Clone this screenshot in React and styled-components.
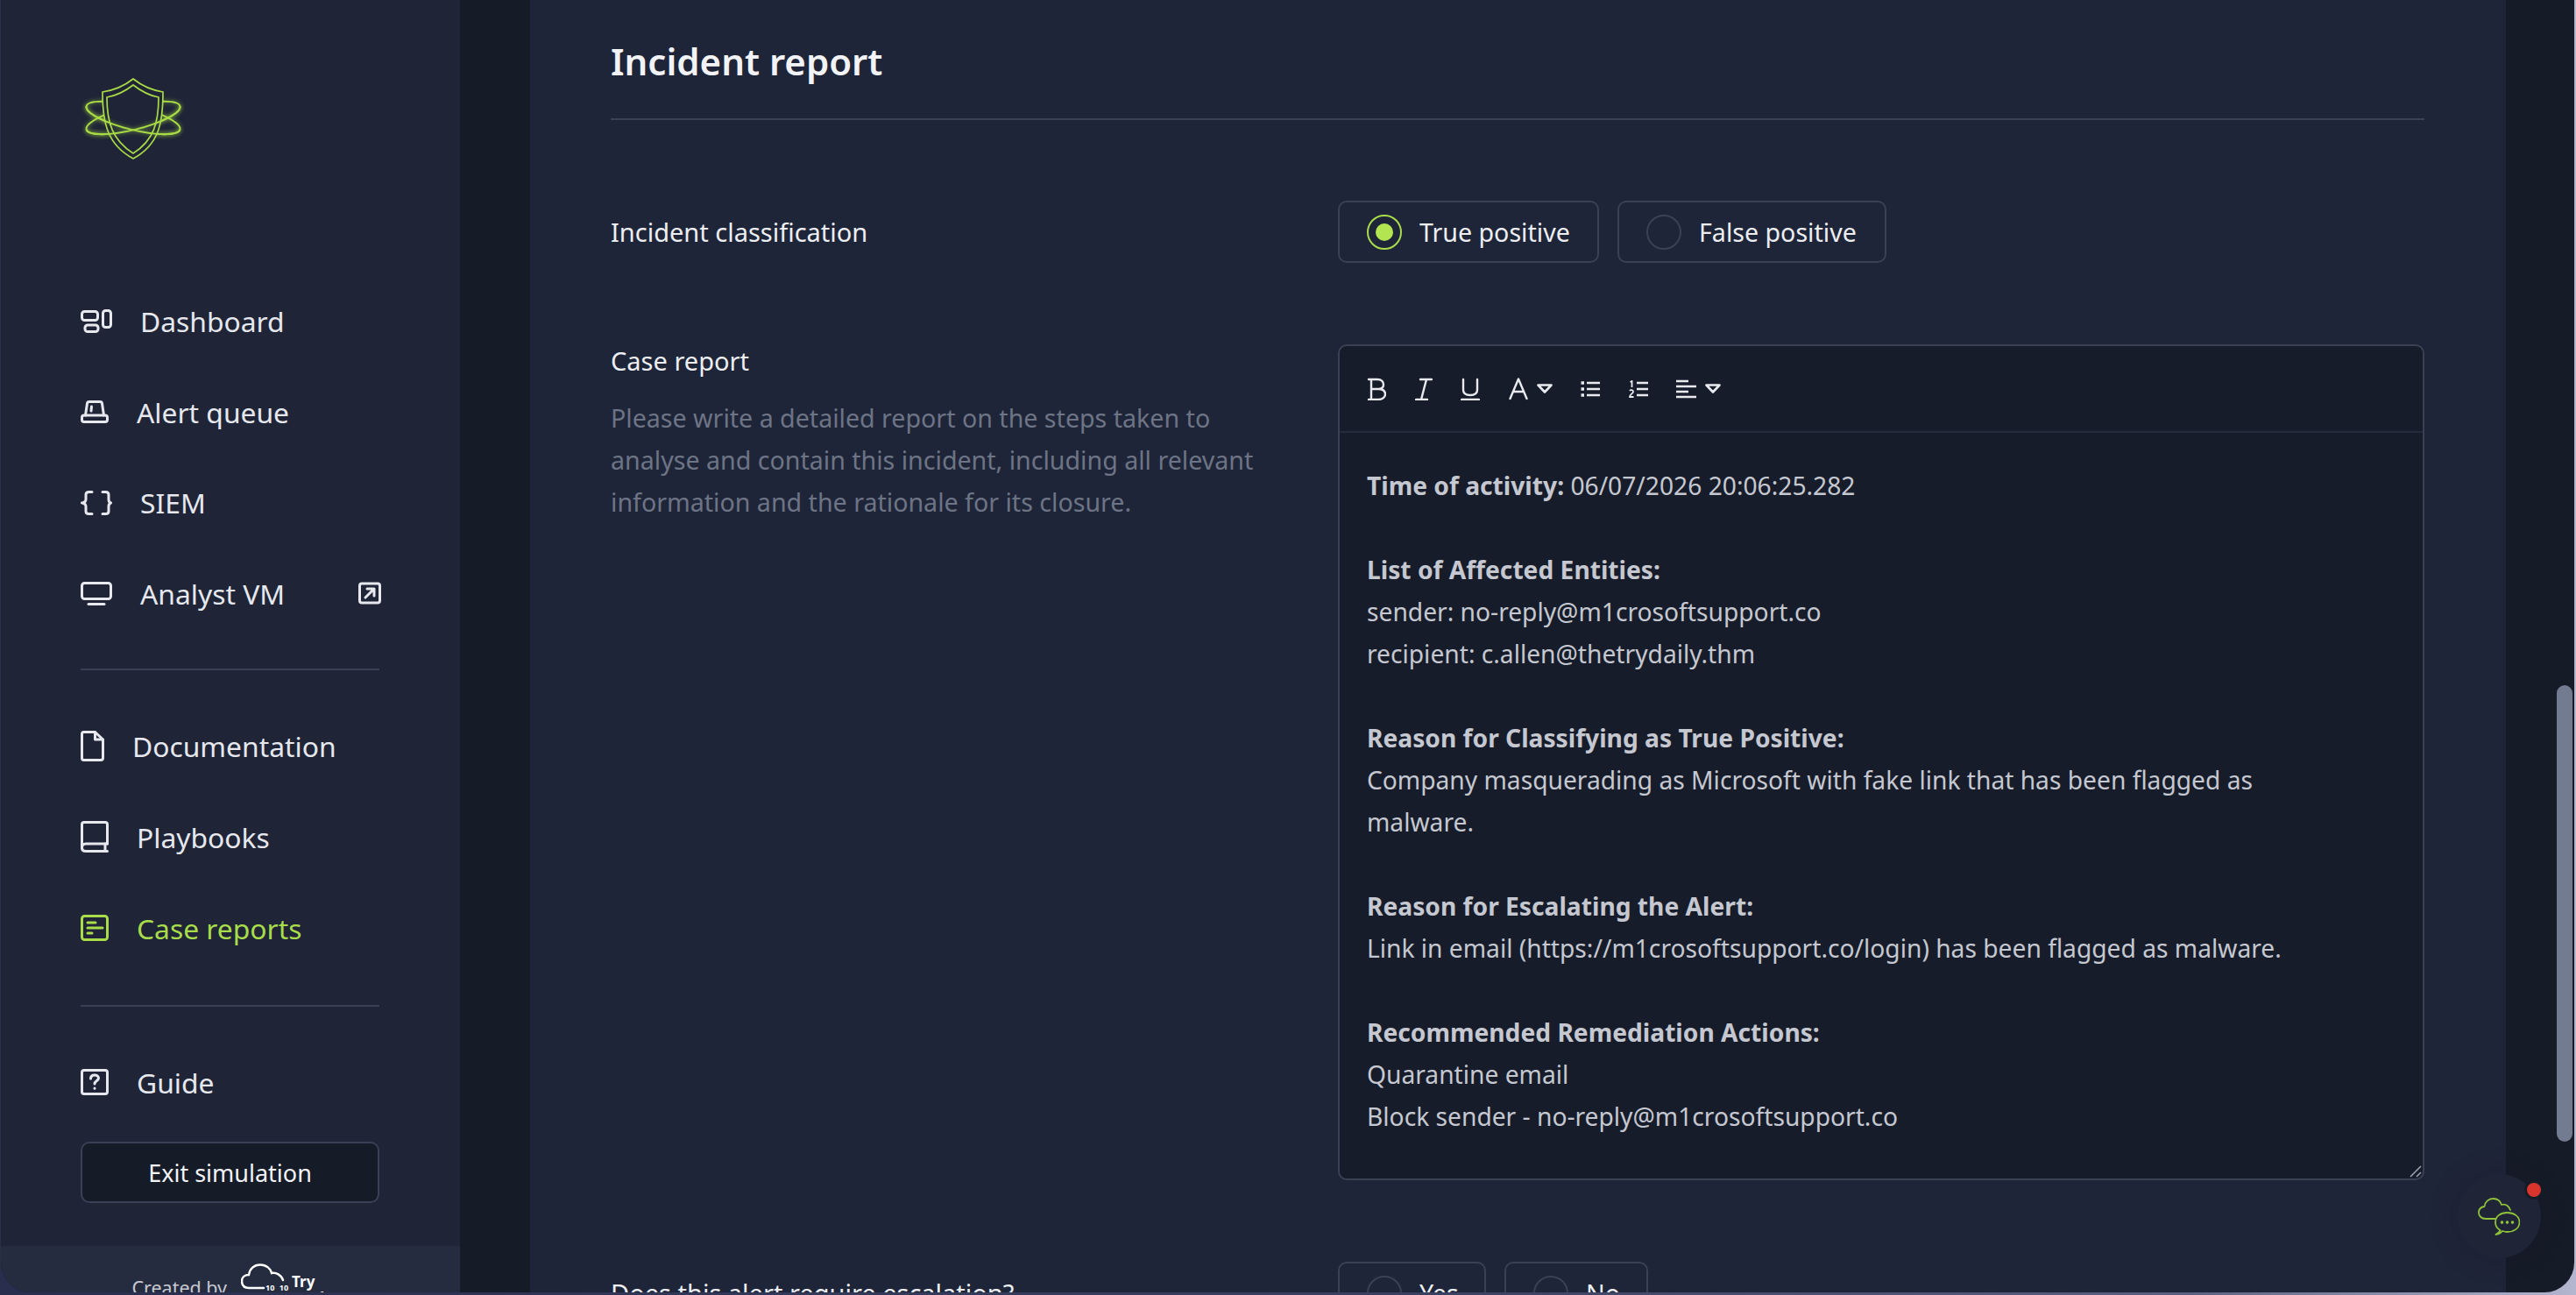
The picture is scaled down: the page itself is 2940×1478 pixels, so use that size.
import styled, { createGlobalStyle } from "styled-components"

const GlobalStyle = createGlobalStyle`
    html, body {
        margin: 0;
        padding: 0;
        background: #2b3050;
        overflow: hidden;
    }
    * {
        box-sizing: border-box;
    }
`

const FONT = `"Noto Sans", "Open Sans", sans-serif`

const Icon = ({ w, h, vb, color = "currentColor", sw = 3, children }) => (
    <svg width={w} height={h} viewBox={vb} fill="none" stroke={color} strokeWidth={sw} strokeLinecap="round" strokeLinejoin="round">
        {children}
    </svg>
)

const SHIELD_OUTER = "M54 1 C44 9 32 14 19 16 C19 50 24 76 54 92 C84 76 88 50 88 16 C76 14 64 9 54 1Z"
const SHIELD_INNER = "M54 8 C45 15 36 20 24 22 C24 50 30 71 54 86 C78 71 83 50 83 22 C71 20 63 15 54 8Z"

const Logo = () => (
    <svg width="108" height="93" viewBox="0 0 108 93" fill="none" stroke="#a9db45" strokeWidth="1.7" style={{ overflow: "visible" }}>
        <Orbits strokeWidth="2">
            <ellipse cx="54" cy="45.5" rx="55" ry="13.5" transform="rotate(14 54 45.5)" />
            <ellipse cx="54" cy="45.5" rx="55" ry="13.5" transform="rotate(-14 54 45.5)" />
        </Orbits>
        <path d={SHIELD_OUTER} fill="#1f2537" />
        <path d={SHIELD_INNER} />
        <Orbits strokeWidth="2">
            <path d="M0.6 32.2 A55 13.5 14 0 0 107.4 58.8" />
            <path d="M0.6 58.8 A55 13.5 -14 0 0 107.4 32.2" />
        </Orbits>
    </svg>
)

const navTop = [
    {
        label: "Dashboard",
        icon: (
            <Icon w={36} h={27} vb="0 0 36 27">
                <rect x="1.5" y="2.5" width="18" height="10" rx="3" />
                <rect x="5" y="18" width="15" height="7.5" rx="3" />
                <rect x="25.5" y="1.5" width="9" height="19" rx="3" />
            </Icon>
        ),
    },
    {
        label: "Alert queue",
        icon: (
            <Icon w={32} h={26} vb="0 0 32 26">
                <rect x="1.5" y="17" width="29" height="7.5" rx="2.5" />
                <path d="M5.5 17 L7.5 3.5 C7.6 2.2 8.5 1.5 10 1.5 H22 C23.5 1.5 24.4 2.2 24.5 3.5 L26.5 17" />
                <path d="M12.5 7 L12 12" />
            </Icon>
        ),
    },
    {
        label: "SIEM",
        icon: (
            <Icon w={36} h={28} vb="0 0 36 28">
                <path d="M13 1.5 H9.5 C7 1.5 6 3 6 4.5 V10 C6 12 4.5 13.5 1.5 14 C4.5 14.5 6 16 6 18 V23.5 C6 25 7 26.5 9.5 26.5 H13" />
                <path d="M25 1.5 H28.5 C31 1.5 32 3 32 4.5 V10 C32 12 33 13.5 34.5 14 C33 14.5 32 16 32 18 V23.5 C32 25 31 26.5 28.5 26.5 H25" />
            </Icon>
        ),
    },
    {
        label: "Analyst VM",
        external: true,
        icon: (
            <Icon w={36} h={27} vb="0 0 36 27">
                <rect x="1.5" y="1.5" width="33" height="18" rx="3" />
                <path d="M9 25.5 H27" />
            </Icon>
        ),
    },
]

const navDocs = [
    {
        label: "Documentation",
        icon: (
            <Icon w={27} h={35} vb="0 0 27 35">
                <path d="M3.5 1.5 H16.5 L25.5 10 V31 C25.5 32.5 24.5 33.5 23 33.5 H3.5 C2.2 33.5 1.5 32.5 1.5 31 V4 C1.5 2.5 2.2 1.5 3.5 1.5Z" />
                <path d="M16.5 1.5 V10 H25.5" />
            </Icon>
        ),
    },
    {
        label: "Playbooks",
        icon: (
            <Icon w={32} h={36} vb="0 0 32 36">
                <path d="M30.5 26 V4 C30.5 2.5 29.5 1.5 28 1.5 H4 C2.5 1.5 1.5 2.5 1.5 4 V31" />
                <path d="M30.5 26 H6 C3 26 1.5 28 1.5 30.5 C1.5 33 3 34.5 6 34.5 H30.5" />
                <path d="M28 26 V34.5" />
            </Icon>
        ),
    },
    {
        label: "Case reports",
        active: true,
        icon: (
            <Icon w={32} h={30} vb="0 0 32 30">
                <rect x="1.5" y="1.5" width="29" height="27" rx="3" />
                <path d="M8 9 H17 M8 15 H25 M8 21 H13" />
            </Icon>
        ),
    },
]

const toolbar = [
    {
        w: 22, h: 26,
        d: "M2 2 H12 C17 2 19 5 19 8 C19 11 17 13 13 13 C18 13 21 15 21 19 C21 22 18 25 13 25 H2 M5 2 V25 M5 13 H13",
    },
    { w: 20, h: 26, d: "M6 2 H19 M1 25 H14 M13 2 L7 25" },
    { w: 22, h: 26, d: "M3 2 V14 C3 18 6 20 11 20 C16 20 19 18 19 14 V2 M1 25 H21" },
]

const Caret = () => (
    <svg width="18" height="11" viewBox="0 0 18 11" fill="none" stroke="#e8eaef" strokeWidth="2.6" strokeLinejoin="round">
        <path d="M1.5 1.5 H16.5 L9 9.5Z" />
    </svg>
)

export default function App() {
    return (
        <>
            <GlobalStyle />
            <Screen>
                <Window>
                    <Sidebar>
                        <LogoBox>
                            <Logo />
                        </LogoBox>
                        <NavGroup $row={103.5}>
                            {navTop.map(item => (
                                <NavItem key={item.label} $active={item.active}>
                                    {item.icon}
                                    <span>{item.label}</span>
                                    {item.external && (
                                        <External>
                                            <Icon w={26} h={26} vb="0 0 26 26">
                                                <rect x="1.5" y="2" width="23" height="22" rx="2.5" />
                                                <path d="M8 18 L18 8 M10 8 H18 V16" />
                                            </Icon>
                                        </External>
                                    )}
                                </NavItem>
                            ))}
                        </NavGroup>
                        <Divider $before={34} $after={34} />
                        <NavGroup $row={104}>
                            {navDocs.map(item => (
                                <NavItem key={item.label} $active={item.active}>
                                    {item.icon}
                                    <span>{item.label}</span>
                                </NavItem>
                            ))}
                        </NavGroup>
                        <Divider $before={36} $after={34} />
                        <NavGroup $row={104}>
                            <NavItem>
                                <Icon w={32} h={30} vb="0 0 32 30">
                                    <rect x="1.5" y="1.5" width="29" height="27" rx="2.5" />
                                    <path d="M11.5 11 C11.5 8 13.5 7 16 7 C18.5 7 20.5 8.5 20.5 10.5 C20.5 13.5 16 13.5 16 17" />
                                    <path d="M16 22 V22.2" />
                                </Icon>
                                <span>Guide</span>
                            </NavItem>
                        </NavGroup>
                        <ExitButton>Exit simulation</ExitButton>
                        <Footer>
                            <CreatedBy>Created by</CreatedBy>
                            <BrandMark>
                                <svg width="50" height="34" viewBox="0 0 50 34" fill="none" stroke="#fff" strokeWidth="2.4" strokeLinecap="round">
                                    <path d="M26 28 H9 C4 28 1 25 1 20 C1 15 5 13 9 13 C10 6 15 1.5 22 1.5 C29 1.5 34 6 35 11 C40 10 46 13 48 19" />
                                </svg>
                                <BrandBits>10 10</BrandBits>
                                <BrandName>Try<br />Hack</BrandName>
                            </BrandMark>
                        </Footer>
                    </Sidebar>
                    <Main>
                        <Heading>Incident report</Heading>
                        <FormRow>
                            <Label>Incident classification</Label>
                            <RadioGroup>
                                <RadioOption $w={298}>
                                    <RadioCircle $checked />
                                    True positive
                                </RadioOption>
                                <RadioOption $w={307}>
                                    <RadioCircle />
                                    False positive
                                </RadioOption>
                            </RadioGroup>
                        </FormRow>
                        <FormRow $top>
                            <div>
                                <ReportLabel>Case report</ReportLabel>
                                <Help>
                                    Please write a detailed report on the steps taken to analyse and contain this incident, including all relevant information and the rationale for its closure.
                                </Help>
                            </div>
                            <Editor>
                                <Toolbar>
                                    {toolbar.map(t => (
                                        <ToolIcon key={t.d} $w={t.w}>
                                            <svg width={t.w} height={t.h} viewBox={`0 0 ${t.w} ${t.h}`} fill="none" stroke="#e8eaef" strokeWidth="2.4" strokeLinecap="round" strokeLinejoin="round">
                                                <path d={t.d} />
                                            </svg>
                                        </ToolIcon>
                                    ))}
                                    <ToolCombo>
                                        <svg width="22" height="26" viewBox="0 0 22 26" fill="none" stroke="#e8eaef" strokeWidth="2.4" strokeLinecap="round" strokeLinejoin="round">
                                            <path d="M1.5 24 L11 1.5 L20.5 24 M5.5 16 H16.5" />
                                        </svg>
                                        <Caret />
                                    </ToolCombo>
                                    <ToolIcon $w={22}>
                                        <svg width="22" height="18" viewBox="0 0 22 18" fill="none" stroke="#e8eaef" strokeWidth="2.4">
                                            <path d="M7 2 H22 M7 9 H22 M7 16 H22" />
                                            <path d="M0.5 2 H4 M0.5 9 H4 M0.5 16 H4" strokeWidth="3.6" />
                                        </svg>
                                    </ToolIcon>
                                    <ToolIcon $w={22}>
                                        <svg width="22" height="20" viewBox="0 0 22 20" fill="none" stroke="#e8eaef" strokeWidth="2.4">
                                            <path d="M9 3 H22 M9 10 H22 M9 17 H22" />
                                            <path d="M1.5 2 L3.5 1 V8 M1 12 C2 10.5 5 11 5 13 C5 15 1 16 1 19 H5.5" strokeWidth="1.8" />
                                        </svg>
                                    </ToolIcon>
                                    <ToolCombo>
                                        <svg width="23" height="22" viewBox="0 0 23 22" fill="none" stroke="#e8eaef" strokeWidth="2.4">
                                            <path d="M0 2 H14 M0 8 H23 M0 14 H14 M0 20 H23" />
                                        </svg>
                                        <Caret />
                                    </ToolCombo>
                                </Toolbar>
                                <EditorBody>
                                    <p><b>Time of activity:</b> 06/07/2026 20:06:25.282</p>
                                    <p><b>List of Affected Entities:</b><br />sender: no-reply@m1crosoftsupport.co<br />recipient: c.allen@thetrydaily.thm</p>
                                    <p><b>Reason for Classifying as True Positive:</b><br />Company masquerading as Microsoft with fake link that has been flagged as malware.</p>
                                    <p><b>Reason for Escalating the Alert:</b><br />Link in email (https://m1crosoftsupport.co/login) has been flagged as malware.</p>
                                    <p><b>Recommended Remediation Actions:</b><br />Quarantine email<br />Block sender - no-reply@m1crosoftsupport.co</p>
                                </EditorBody>
                                <Grip width="14" height="14" viewBox="0 0 14 14" stroke="#9aa0ad" strokeWidth="1.6">
                                    <path d="M1 13 L13 1 M8 13 L13 8" />
                                </Grip>
                            </Editor>
                        </FormRow>
                        <FormRow>
                            <Label>Does this alert require escalation?</Label>
                            <RadioGroup>
                                <RadioOption $w={169}>
                                    <RadioCircle />
                                    Yes
                                </RadioOption>
                                <RadioOption $w={164}>
                                    <RadioCircle />
                                    No
                                </RadioOption>
                            </RadioGroup>
                        </FormRow>
                    </Main>
                    <ScrollThumb />
                    <ChatButton>
                        <svg width="48" height="43" viewBox="0 0 48 43" fill="none" stroke="#8fc23a" strokeWidth="1.8" strokeLinecap="round" strokeLinejoin="round">
                            <path d="M20 24 H9 C4 24 1 21 1 17 C1 13 3.5 10.5 7.5 10 C8 5 12 1 17.5 1 C22 1 25.5 3.5 27 8 C31 7 35 9 37 14" />
                            <path d="M25.5 37 C21 34.5 20 31 20 28 C20 21 26 17 33.5 17 C41 17 47.5 21 47.5 28 C47.5 35 41 39 33.5 39 C31.5 39 29.5 38.5 28 38 C26.5 40 24 41.5 20.5 42 C22.5 40.5 25 39 25.5 37Z" />
                            <path d="M27.5 28 V28.1 M33.5 28 V28.1 M39.5 28 V28.1" strokeWidth="3.6" />
                        </svg>
                        <Badge />
                    </ChatButton>
                </Window>
            </Screen>
        </>
    )
}

const Screen = styled.div`
    width: 2940px;
    height: 1478px;
    padding: 0 2px 3px 1px;
    overflow: hidden;
    font-family: ${FONT};
    background: linear-gradient(90deg, #2a2e4e 0%, #3a4160 55%, #5a6180 85%, #b4b6cf 100%);
`

const Window = styled.div`
    position: relative;
    display: flex;
    height: 1475px;
    background: #161b28;
    border-radius: 0 0 34px 34px;
    overflow: hidden;
`

const Sidebar = styled.aside`
    display: flex;
    flex-direction: column;
    flex: 0 0 524px;
    margin-right: 80px;
    padding: 89px 91px 0;
    background: #1f2537;
`

const LogoBox = styled.div`
    height: 93px;
    margin: 0 0 133px 6px;
`

const Orbits = styled.g`
    filter: drop-shadow(0 0 2.5px rgba(169, 219, 69, 0.7));
`

const NavGroup = styled.nav`
    display: flex;
    flex-direction: column;
    a {
        height: ${props => props.$row}px;
    }
`

const NavItem = styled.a`
    display: flex;
    align-items: center;
    gap: 32px;
    font-size: 31.8px;
    color: ${props => props.$active ? "#a9dc4a" : "#e6e8ee"};
`

const External = styled.span`
    display: flex;
    margin-left: auto;
    margin-right: -1px;
`

const Divider = styled.hr`
    width: 341px;
    height: 2px;
    margin: ${props => props.$before}px 0 ${props => props.$after}px;
    border: 0;
    background: #394053;
`

const ExitButton = styled.button`
    width: 341px;
    height: 70px;
    flex: none;
    margin-top: 16px;
    border: 2px solid #3a4154;
    border-radius: 10px;
    background: #161b28;
    color: #f2f3f6;
    font-family: ${FONT};
    font-size: 27px;
`

const Footer = styled.div`
    display: flex;
    align-items: flex-start;
    justify-content: center;
    gap: 16px;
    height: 53px;
    margin: 49px -91px 0;
    padding: 20px 0 0;
    background: #252c40;
    overflow: hidden;
`

const CreatedBy = styled.span`
    margin-top: 12px;
    color: #c5c8d1;
    font-size: 21.5px;
    line-height: 32px;
`

const BrandMark = styled.div`
    display: flex;
    gap: 8px;
    position: relative;
    height: 60px;
`

const BrandBits = styled.span`
    position: absolute;
    left: 28px;
    top: 21px;
    color: #fff;
    font-size: 9px;
    font-weight: 700;
    white-space: pre;
    word-spacing: 3px;
`

const BrandName = styled.span`
    margin-top: 11px;
    color: #fff;
    font-size: 17px;
    line-height: 19px;
    font-weight: 700;
`

const Main = styled.main`
    flex: 0 0 2255px;
    padding: 40px 93px 0 92px;
    background: #1f2538;
`

const Heading = styled.h1`
    margin: 0 0 92px;
    padding-bottom: 35px;
    border-bottom: 2px solid #3a4154;
    color: #f2f3f6;
    font-size: 42px;
    line-height: 60px;
    font-weight: 600;
`

const FormRow = styled.section`
    display: grid;
    grid-template-columns: 830px 1240px;
    align-items: ${props => props.$top ? "start" : "center"};
    margin-bottom: 93px;
`

const Label = styled.div`
    color: #eceef2;
    font-size: 29px;
`

const ReportLabel = styled(Label)`
    line-height: 38px;
    margin-bottom: 22px;
`

const Help = styled.p`
    width: 760px;
    margin: 0;
    color: #6d7485;
    font-size: 28.6px;
    line-height: 48px;
`

const RadioGroup = styled.div`
    display: flex;
    gap: 21px;
`

const RadioOption = styled.label`
    display: flex;
    align-items: center;
    gap: 20px;
    width: ${props => props.$w}px;
    height: 71px;
    padding-left: 31px;
    border: 2px solid #3a4154;
    border-radius: 10px;
    color: #eceef2;
    font-size: 28.6px;
`

const RadioCircle = styled.span`
    display: flex;
    align-items: center;
    justify-content: center;
    width: 40px;
    height: 40px;
    border: 2px solid ${props => props.$checked ? "#a9dc4a" : "#3a4154"};
    border-radius: 50%;
    &::after {
        content: "";
        display: ${props => props.$checked ? "block" : "none"};
        width: 20px;
        height: 20px;
        border-radius: 50%;
        background: #b3e550;
    }
`

const Editor = styled.div`
    position: relative;
    height: 954px;
    border: 2px solid #3a4154;
    border-radius: 10px;
    background: #171c2a;
`

const Toolbar = styled.div`
    display: flex;
    align-items: center;
    gap: 32.5px;
    height: 99px;
    padding-left: 31px;
    border-bottom: 2px solid #252b3d;
`

const ToolIcon = styled.span`
    display: flex;
    align-items: center;
    width: ${props => props.$w}px;
`

const ToolCombo = styled.span`
    display: flex;
    align-items: center;
    gap: 10px;
`

const EditorBody = styled.div`
    padding: 36px 31px 0;
    color: #c5c8d0;
    font-size: 28.2px;
    line-height: 48px;
    p {
        margin: 0 0 48px;
        width: 1100px;
    }
    b {
        font-weight: 700;
    }
`

const Grip = styled.svg`
    position: absolute;
    right: 1px;
    bottom: 1px;
`

const ScrollThumb = styled.div`
    position: absolute;
    top: 782px;
    right: 2px;
    width: 18px;
    height: 521px;
    border-radius: 9px;
    background: #727b90;
`

const ChatButton = styled.div`
    position: absolute;
    left: 2803px;
    top: 1340px;
    display: flex;
    align-items: center;
    justify-content: center;
    width: 96px;
    height: 96px;
    border-radius: 50%;
    background: #1f2537;
    box-shadow: 0 0 30px rgba(20, 25, 38, 0.25);
`

const Badge = styled.span`
    position: absolute;
    top: 10px;
    right: 0;
    width: 16px;
    height: 16px;
    border-radius: 50%;
    background: #d9352c;
    box-shadow: 0 0 0 3px #161b28;
`
